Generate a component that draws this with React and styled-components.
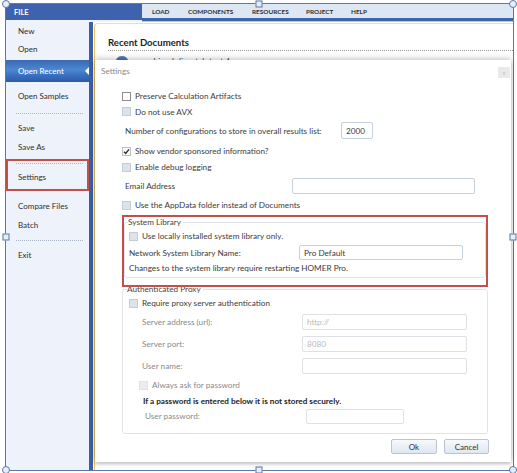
import styled, { createGlobalStyle } from "styled-components";

const GlobalStyle = createGlobalStyle`
  html, body {
    margin: 0;
    padding: 0;
    background: #ffffff;
  }
  body {
    font-family: Lato, "Liberation Sans", sans-serif;
    color: #3b3b3b;
  }
`;

const Page = styled.div`
  width: 517px;
  height: 473px;
  padding: 3px 0 0 5px;
  box-sizing: border-box;
  overflow: hidden;
`;

const Frame = styled.div`
  position: relative;
  width: 509px;
  height: 468px;
  border: 1px solid #5a79a5;
  box-sizing: border-box;
  display: flex;
  flex-direction: column;
  background: #fff;
`;

const Handle = styled.span`
  position: absolute;
  left: ${(p) => p.$x};
  top: ${(p) => p.$y};
  width: ${(p) => (p.$round ? 8 : 7)}px;
  height: ${(p) => (p.$round ? 8 : 7)}px;
  transform: translate(-50%, -50%);
  margin: -0.5px 0 0 -0.5px;
  border: 1px solid #5a79a5;
  border-radius: ${(p) => (p.$round ? "50%" : "0")};
  background: #e6eef8;
  box-sizing: border-box;
  z-index: 5;
`;

/* ---------- ribbon ---------- */

const Ribbon = styled.div`
  display: flex;
  height: 18px;
  background: #eef3fb;
`;

const FileTab = styled.div`
  width: 136px;
  height: 16px;
  background: #3e62ad;
  color: #fff;
  font-weight: 700;
  font-size: 7.5px;
  display: flex;
  align-items: center;
  padding-left: 8px;
  box-sizing: border-box;
`;

const Menu = styled.div`
  flex: 1;
  display: flex;
  flex-direction: column;
`;

const MenuItems = styled.div`
  height: 14px;
  background: #dde7f4;
  display: flex;
  align-items: center;
  padding-left: 10px;
`;

const MenuItem = styled.span`
  width: ${(p) => p.$w}px;
  font-size: 6.4px;
  font-weight: 700;
  color: #2f2f2f;
`;

const BlueLine = styled.div`
  height: 3px;
  background: #3f63ad;
`;

const OrangeLine = styled.div`
  height: 1px;
  background: #f3c24a;
`;

/* ---------- body ---------- */

const Body = styled.div`
  flex: 1;
  display: flex;
  min-height: 0;
`;

const Sidebar = styled.div`
  width: 83px;
  background: #eef3fb;
  display: flex;
  flex-direction: column;
`;

const SideItem = styled.div`
  position: relative;
  height: ${(p) => p.$h}px;
  margin-top: ${(p) => p.$mt || 0}px;
  display: flex;
  align-items: center;
  padding-left: ${(p) => p.$pl || 12}px;
  font-size: 8px;
  color: ${(p) => (p.$active ? "#fff" : "#2e2e2e")};
  background: ${(p) =>
    p.$active
      ? "linear-gradient(to bottom, #3a68b4 0%, #4c88d2 45%, #3a6fbf 70%, #2d5aa7 100%)"
      : "transparent"};
  ${(p) =>
    p.$active &&
    `
    &::after {
      content: "";
      position: absolute;
      right: 0;
      top: 50%;
      margin-top: -4px;
      border-right: 4px solid #fff;
      border-top: 4px solid transparent;
      border-bottom: 4px solid transparent;
    }
  `}
`;

const SideSep = styled.div`
  margin: ${(p) => p.$m || "6px 6px 4px 10px"};
  border-top: 1px dotted #a9b4c4;
`;

const Annotate = styled.div`
  margin-top: 3px;
  height: 32px;
  border: 2px solid #c24f4a;
  box-sizing: border-box;
  display: flex;
  flex-direction: column;
`;

const BlueBar = styled.div`
  width: 4px;
  background: #3c5fa9;
`;

const Content = styled.div`
  position: relative;
  flex: 1;
  padding-left: 1px;
  background: #fff;
  display: flex;
`;

const RecentPanel = styled.div`
  flex: 1;
  margin-top: 1px;
  border-left: 1px solid #f1c35b;
  border-top: 1px solid #f6dd9c;
  border-top-left-radius: 4px;
  padding: 12px 0 0 13px;
`;

const RecentTitle = styled.div`
  font-size: 9.6px;
  font-weight: 700;
  color: #1e1e1e;
  line-height: 14px;
  border-bottom: 1px dotted #9a9a9a;
`;

const RecentItem = styled.div`
  display: flex;
  align-items: center;
  gap: 10px;
  height: 16px;
  padding-left: 8px;
  margin-top: 2px;
  font-size: 8.4px;
  color: #444;
`;

const DocIcon = styled.span`
  width: 12px;
  height: 10px;
  border-radius: 50% 50% 2px 2px;
  background: linear-gradient(#5b7fbf, #2f569e);
`;

/* ---------- dialog ---------- */

const Dialog = styled.div`
  position: absolute;
  left: 2px;
  top: 38px;
  width: 416px;
  height: 402px;
  background: #fff;
  box-shadow: 0 -2px 6px rgba(0, 0, 0, 0.18), 0 2px 4px rgba(0, 0, 0, 0.22);
  padding-top: 2px;
  box-sizing: border-box;
  z-index: 2;
`;

const DialogTitle = styled.div`
  height: 18px;
  display: flex;
  align-items: center;
  padding-left: 6px;
  font-size: 8.2px;
  color: #8a8a8a;
`;

const CloseBtn = styled.span`
  position: absolute;
  right: 1px;
  top: 7px;
  width: 12px;
  height: 11px;
  background: #e9e9e9;
  color: #c2c2c2;
  font-size: 6px;
  display: flex;
  align-items: center;
  justify-content: center;
`;

const Form = styled.div`
  width: 366px;
  margin-left: 27px;
  display: flex;
  flex-direction: column;
  font-size: 8.2px;
`;

const Row = styled.div`
  display: flex;
  align-items: center;
  height: ${(p) => p.$h}px;
  margin-top: ${(p) => p.$mt || 0}px;
  padding-left: ${(p) => p.$indent || 0}px;
  color: ${(p) => p.$color || "#3b3b3b"};
  font-weight: ${(p) => (p.$bold ? 700 : 400)};
  white-space: nowrap;
  gap: ${(p) => (p.$gap == null ? 4 : p.$gap)}px;
`;

const Label = styled.span`
  width: ${(p) => p.$w}px;
  flex: none;
`;

const Input = styled.div`
  width: ${(p) => p.$w}px;
  height: ${(p) => p.$h || 16}px;
  box-sizing: border-box;
  border: 1px solid ${(p) => (p.$faint ? "#dde1e6" : "#c6d1de")};
  border-radius: 2px;
  background: #fff;
  display: flex;
  align-items: center;
  padding-left: 4px;
  font-size: 8.2px;
  color: ${(p) => (p.$faint ? "#b9b9b9" : "#3b3b3b")};
`;

const boxLook = {
  off: "background:#fff;border-color:#8c8c8c;",
  on: "background:#fbfbfb;border-color:#b9bec5;",
  disabled: "background:#dde3eb;border-color:#c4ccd6;",
  faint: "background:#ececec;border-color:#e2e2e2;",
};

const Box = styled.span`
  width: 9px;
  height: 9px;
  flex: none;
  border: 1px solid;
  box-sizing: border-box;
  display: flex;
  align-items: center;
  justify-content: center;
  ${(p) => boxLook[p.$state]}
`;

const RedBox = styled.div`
  position: relative;
  z-index: 1;
  margin-top: 2px;
  height: 72px;
  border: 2.5px solid #c24f4a;
  box-sizing: border-box;
  padding-bottom: 5px;
`;

const Group = styled.fieldset`
  margin: ${(p) => p.$mt || 0}px 0 0 0;
  min-width: 0;
  border: 1px solid #dfe4ea;
  border-radius: 3px;
  padding: 0 ${(p) => p.$pad}px ${(p) => p.$pb}px ${(p) => p.$pad}px;
`;

const Legend = styled.legend`
  font-size: 8.2px;
  line-height: 11px;
  color: #444;
  padding: 0 2px 0 0;
  margin-left: ${(p) => p.$ml}px;
`;

const Buttons = styled.div`
  display: flex;
  justify-content: flex-end;
  gap: 7px;
  margin: 5px -1px 0 0;
`;

const Button = styled.div`
  width: ${(p) => p.$w}px;
  height: 15px;
  box-sizing: border-box;
  border: 1px solid #b9c5d3;
  border-radius: 2px;
  background: linear-gradient(#f7f9fc, #dfe7f1);
  display: flex;
  align-items: center;
  justify-content: center;
  font-size: 8px;
  color: #333;
`;

const Check = ({ state }) => (
  <Box $state={state}>
    {state === "on" && (
      <svg width="7" height="7" viewBox="0 0 7 7">
        <path d="M1 3.8 L2.7 5.5 L6 1.3" fill="none" stroke="#2a2a2a" strokeWidth="1.3" />
      </svg>
    )}
  </Box>
);

const CheckRow = ({ state, h, mt, indent, color, children }) => (
  <Row $h={h} $mt={mt} $indent={indent} $color={color}>
    <Check state={state} />
    <span>{children}</span>
  </Row>
);

const App = () => {
  return (
    <Page>
      <GlobalStyle />
      <Frame>
        <Handle $round $x="0px" $y="0px" />
        <Handle $x="50%" $y="0px" />
        <Handle $round $x="100%" $y="0px" />
        <Handle $x="0px" $y="50%" />
        <Handle $x="100%" $y="50%" />
        <Handle $round $x="0px" $y="100%" />
        <Handle $x="50%" $y="100%" />
        <Handle $round $x="100%" $y="100%" />

        <Ribbon>
          <FileTab>FILE</FileTab>
          <Menu>
            <MenuItems>
              <MenuItem $w={36}>LOAD</MenuItem>
              <MenuItem $w={64}>COMPONENTS</MenuItem>
              <MenuItem $w={54}>RESOURCES</MenuItem>
              <MenuItem $w={45}>PROJECT</MenuItem>
              <MenuItem $w={30}>HELP</MenuItem>
            </MenuItems>
            <BlueLine />
            <OrangeLine />
          </Menu>
        </Ribbon>

        <Body>
          <Sidebar>
            <SideItem $h={18}>New</SideItem>
            <SideItem $h={18}>Open</SideItem>
            <SideItem $h={22} $mt={2} $active>
              Open Recent
            </SideItem>
            <SideItem $h={22} $mt={3}>
              Open Samples
            </SideItem>
            <SideSep />
            <SideItem $h={19}>Save</SideItem>
            <SideItem $h={19}>Save As</SideItem>
            <Annotate>
              <SideSep $m="2px 4px 0 8px" />
              <SideItem $h={25} $pl={10}>
                Settings
              </SideItem>
            </Annotate>
            <SideItem $h={19} $mt={5}>
              Compare Files
            </SideItem>
            <SideItem $h={19}>Batch</SideItem>
            <SideSep />
            <SideItem $h={19}>Exit</SideItem>
          </Sidebar>
          <BlueBar />
          <Content>
            <RecentPanel>
              <RecentTitle>Recent Documents</RecentTitle>
              <RecentItem>
                <DocIcon />
                <span>combined dispatch test 4</span>
              </RecentItem>
            </RecentPanel>

            <Dialog>
              <DialogTitle>Settings</DialogTitle>
              <CloseBtn>x</CloseBtn>
              <Form>
                <CheckRow state="off" h={16} mt={8}>
                  Preserve Calculation Artifacts
                </CheckRow>
                <CheckRow state="disabled" h={15}>
                  Do not use AVX
                </CheckRow>
                <Row $h={19} $mt={2} $indent={3} $gap={0}>
                  <Label $w={216}>Number of configurations to store in overall results list:</Label>
                  <Input $w={32} $h={17}>2000</Input>
                </Row>
                <CheckRow state="on" h={16} mt={3}>
                  Show vendor sponsored information?
                </CheckRow>
                <CheckRow state="disabled" h={16}>
                  Enable debug logging
                </CheckRow>
                <Row $h={17} $mt={2} $indent={3} $gap={0}>
                  <Label $w={167}>Email Address</Label>
                  <Input $w={183} />
                </Row>
                <CheckRow state="disabled" h={16} mt={3}>
                  Use the AppData folder instead of Documents
                </CheckRow>

                <RedBox>
                  <Group $pad={4} $pb={3}>
                    <Legend $ml={-1}>System Library</Legend>
                    <CheckRow state="disabled" h={16}>
                      Use locally installed system library only.
                    </CheckRow>
                    <Row $h={17} $gap={0}>
                      <Label $w={170}>Network System Library Name:</Label>
                      <Input $w={164} $h={15}>Pro Default</Input>
                    </Row>
                    <Row $h={13}>Changes to the system library require restarting HOMER Pro.</Row>
                  </Group>
                </RedBox>

                <Group $mt={-3} $pad={6} $pb={9}>
                  <Legend $ml={-2}>Authenticated Proxy</Legend>
                  <CheckRow state="disabled" h={16}>
                    Require proxy server authentication
                  </CheckRow>
                  <Row $h={22} $indent={13} $gap={0} $color="#8a8a8a">
                    <Label $w={160}>Server address (url):</Label>
                    <Input $w={165} $faint>http://</Input>
                  </Row>
                  <Row $h={22} $indent={13} $gap={0} $color="#8a8a8a">
                    <Label $w={160}>Server port:</Label>
                    <Input $w={165} $faint>8080</Input>
                  </Row>
                  <Row $h={22} $indent={13} $gap={0} $color="#8a8a8a">
                    <Label $w={160}>User name:</Label>
                    <Input $w={165} $faint />
                  </Row>
                  <CheckRow state="faint" h={16} indent={10} color="#8a8a8a">
                    Always ask for password
                  </CheckRow>
                  <Row $h={15} $indent={14} $bold $color="#222">
                    If a password is entered below it is not stored securely.
                  </Row>
                  <Row $h={16} $indent={16} $gap={0} $color="#8a8a8a">
                    <Label $w={161}>User password:</Label>
                    <Input $w={98} $h={15} $faint />
                  </Row>
                </Group>

                <Buttons>
                  <Button $w={46}>Ok</Button>
                  <Button $w={45}>Cancel</Button>
                </Buttons>
              </Form>
            </Dialog>
          </Content>
        </Body>
      </Frame>
    </Page>
  );
};

export default App;
